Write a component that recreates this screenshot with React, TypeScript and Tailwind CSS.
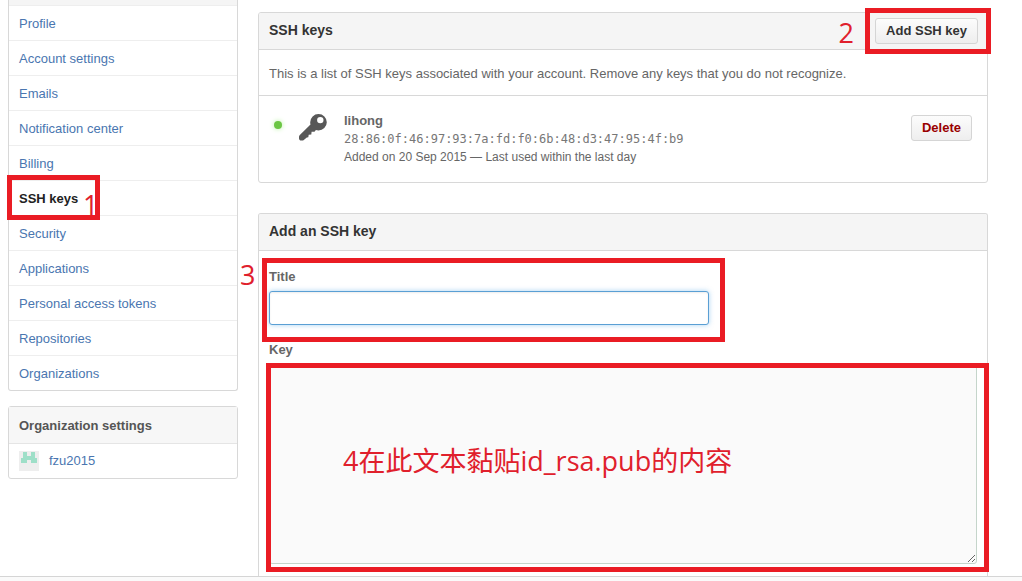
import type { ReactNode } from 'react'
import { clsx } from 'clsx'

// ── Data ───────────────────────────────────────────────────────────────────

const MENU = [
  'Profile',
  'Account settings',
  'Emails',
  'Notification center',
  'Billing',
  'SSH keys',
  'Security',
  'Applications',
  'Personal access tokens',
  'Repositories',
  'Organizations',
]

const ACTIVE = 'SSH keys'

const KEYS = [
  {
    name: 'lihong',
    fingerprint: '28:86:0f:46:97:93:7a:fd:f0:6b:48:d3:47:95:4f:b9',
    usage: 'Added on 20 Sep 2015 — Last used within the last day',
  },
]

// ── Icons ──────────────────────────────────────────────────────────────────

function KeyIcon() {
  return (
    <svg width="30" height="28" viewBox="0 0 30 28" fill="#585858" aria-hidden="true">
      <path
        fillRule="evenodd"
        d="M20.500 1a8.300 8.300 0 0 1 8.300 8.300 8.300 8.300 0 0 1-8.300 8.200c-1 0-1.800-.2-2.600-.5l-1.400 1.700-2.900.1-.3 2.600-2.600.3-.4 2.500-1.500.3-3 2.600c-.5.4-1 .5-1.600.5H3.200C2 27.600 1 26.600 1 25.400v-1.600c0-.8.2-1.300.8-1.900L12.500 11.500c-.2-.7-.3-1.400-.3-2.200A8.300 8.300 0 0 1 20.500 1zM22.300 3.900a3.200 3.200 0 1 0 0 6.400 3.200 3.200 0 0 0 0-6.400z"
      />
    </svg>
  )
}

function Identicon() {
  return (
    <svg width="20" height="20" viewBox="0 0 20 20" shapeRendering="crispEdges" aria-hidden="true">
      <rect width="20" height="20" fill="#eee" />
      <path fill="#9edfc8" d="M4 1h4v4h4V1h4v6h2v5h-6V9H8v3H2V7h2z" />
    </svg>
  )
}

// ── Building blocks ────────────────────────────────────────────────────────

// Red frame drawn over whatever it is nested in
function Frame({ className }: { className: string }) {
  return <div className={clsx('pointer-events-none absolute z-20 border-5 border-[#ea1c24]', className)} />
}

function Note({ className, children }: { className: string; children: ReactNode }) {
  return (
    <span
      className={clsx(
        "pointer-events-none absolute z-10 font-['Open_Sans','Noto_Sans_CJK_SC',sans-serif] text-[27px] leading-9 font-normal whitespace-nowrap text-[#e0202c]",
        className,
      )}
    >
      {children}
    </span>
  )
}

function BoxHeader({ title, children }: { title: string; children?: ReactNode }) {
  return (
    <header className="relative flex h-[37px] items-center justify-between rounded-t-[2px] border-b border-[#d8d8d8] bg-[#f5f5f5] pr-[9px] pl-[10px]">
      <h2 className="self-start text-[14px] leading-[34px] font-bold text-[#333]">{title}</h2>
      {children}
    </header>
  )
}

function Button({ danger, children }: { danger?: boolean; children: ReactNode }) {
  return (
    <button
      type="button"
      className={clsx(
        'h-[26px] rounded-[3px] border border-[#d5d5d5] bg-linear-to-b from-[#fcfcfc] to-[#eee] px-[10px] leading-6 font-bold',
        danger ? 'text-[#900]' : 'text-[#333]',
      )}
    >
      {children}
    </button>
  )
}

// ── Sidebar ────────────────────────────────────────────────────────────────

function Sidebar() {
  return (
    <aside className="flex w-[230px] shrink-0 flex-col gap-[15px]">
      <nav className="rounded-b-[3px] border border-t-0 border-[#d8d8d8]">
        <div className="h-[6px] border-b border-[#eee] bg-[#f5f5f5]" />
        <ul className="divide-y divide-[#eee]">
          {MENU.map((item) => (
            <li key={item} className="relative h-[35px] last:h-[34px]">
              <a
                href="#"
                className={clsx(
                  'block px-[10px] leading-9',
                  item === ACTIVE ? 'font-bold text-[#222]' : 'text-[#4a76b0]',
                )}
              >
                {item}
              </a>
              {item === ACTIVE && (
                <>
                  <Frame className="-top-[6px] -left-[2px] h-[45px] w-[93px]" />
                  <Note className="top-[6px] left-[74px]">1</Note>
                </>
              )}
            </li>
          ))}
        </ul>
      </nav>

      <section className="rounded-[3px] border border-[#d8d8d8]">
        <h2 className="h-[37px] border-b border-[#e5e5e5] bg-[#f7f7f7] px-[10px] leading-[38px] font-bold text-[#555]">
          Organization settings
        </h2>
        <a href="#" className="flex h-[34px] items-center gap-[10px] px-[10px] leading-9 text-[#4a76b0]">
          <Identicon />
          fzu2015
        </a>
      </section>
    </aside>
  )
}

// ── Main column ────────────────────────────────────────────────────────────

function KeyList() {
  return (
    <section className="rounded-[3px] border border-[#d8d8d8]">
      <BoxHeader title="SSH keys">
        <Button>Add SSH key</Button>
        <Frame className="-top-[5px] -right-1 h-[46px] w-[126px]" />
        <Note className="top-[2px] right-[133px]">2</Note>
      </BoxHeader>
      <p className="h-[46px] border-b border-[#d8d8d8] px-[10px] leading-[47px]">
        This is a list of SSH keys associated with your account. Remove any keys that you do not recognize.
      </p>
      <ul>
        {KEYS.map((k) => (
          <li key={k.fingerprint} className="flex h-[86px] items-start px-[15px] pt-4">
            <span className="mt-[9px] size-2 shrink-0 rounded-full bg-[#6cc644] shadow-[0_0_5px_#b9f0a0]" />
            <span className="mt-px ml-4 shrink-0">
              <KeyIcon />
            </span>
            <div className="ml-4 flex-1 leading-[18px]">
              <strong className="block">{k.name}</strong>
              <code className="block font-['DejaVu_Sans_Mono',monospace] text-[12px] text-[#777]">{k.fingerprint}</code>
              <span className="block text-[12px]">{k.usage}</span>
            </div>
            <div className="mt-[3px] flex">
              <Button danger>Delete</Button>
            </div>
          </li>
        ))}
      </ul>
    </section>
  )
}

function AddKeyForm() {
  return (
    <section className="flex-1 rounded-t-[3px] border border-b-0 border-[#d8d8d8]">
      <BoxHeader title="Add an SSH key" />
      <form className="px-[10px] pt-4">
        <div className="relative">
          <label htmlFor="key-title" className="block leading-5 font-bold">
            Title
          </label>
          <input
            id="key-title"
            type="text"
            className="mt-1 block h-[34px] w-[440px] rounded-[3px] border border-[#5a9fd4] bg-white px-2 shadow-[inset_0_1px_2px_rgba(0,0,0,0.075),0_0_5px_rgba(81,167,232,0.5)] outline-none"
          />
          <Frame className="-top-[9px] -left-[7px] h-[84px] w-[463px]" />
          <Note className="-top-[10px] -left-[29px]">3</Note>
        </div>
        <div className="relative mt-[15px]">
          <label htmlFor="key-body" className="block leading-5 font-bold">
            Key
          </label>
          <textarea
            id="key-body"
            className="mt-1 block h-[200px] w-full max-w-[708px] rounded-[3px] border border-[#c5d5cb] bg-[#fafafa] p-2 outline-none"
          />
          <Frame className="top-[23px] -right-[12px] -left-[3px] h-[209px]" />
          <Note className="top-[103px] left-[74px]">4在此文本黏贴id_rsa.pub的内容</Note>
        </div>
      </form>
    </section>
  )
}

export default function App() {
  return (
    <div className="flex h-screen flex-col bg-white font-['Liberation_Sans',Arial,sans-serif] text-[13px] text-[#666]">
      <div className="flex min-h-0 flex-1 gap-5 overflow-hidden pr-[34px] pl-2">
        <Sidebar />
        <main className="flex min-w-0 flex-1 flex-col gap-[30px] pt-3">
          <KeyList />
          <AddKeyForm />
        </main>
      </div>
      <footer className="h-[5px] shrink-0 border-t border-[#d5d5d5] bg-[#fafafa]" />
    </div>
  )
}
